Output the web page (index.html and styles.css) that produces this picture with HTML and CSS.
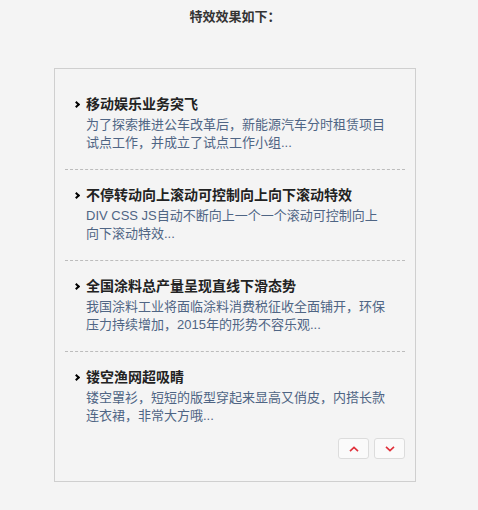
FILE: index.html
```html
<!DOCTYPE html>
<html>
<head>
<meta charset="utf-8" />
<title>向上向下滚动新闻</title>
<link rel="stylesheet" href="styles.css">
</head>
<body>
<div class="wrap">
	<h3 class="head">特效效果如下：</h3>
	<div class="news">
		<ul class="list">
			<li>
				<h4>移动娱乐业务突飞</h4>
				<p>为了探索推进公车改革后，新能源汽车分时租赁项目试点工作，并成立了试点工作小组...</p>
			</li>
			<li>
				<h4>不停转动向上滚动可控制向上向下滚动特效</h4>
				<p>DIV CSS JS自动不断向上一个一个滚动可控制向上向下滚动特效...</p>
			</li>
			<li>
				<h4>全国涂料总产量呈现直线下滑态势</h4>
				<p>我国涂料工业将面临涂料消费税征收全面铺开，环保压力持续增加，2015年的形势不容乐观...</p>
			</li>
			<li>
				<h4>镂空渔网超吸睛</h4>
				<p>镂空罩衫，短短的版型穿起来显高又俏皮，内搭长款连衣裙，非常大方哦...</p>
			</li>
		</ul>
		<div class="ctrl">
			<a class="btn" href="javascript:;"><svg width="10" height="6" viewBox="0 0 10 6"><polyline points="1,5.2 5,1.4 9,5.2" /></svg></a>
			<a class="btn" href="javascript:;"><svg width="10" height="6" viewBox="0 0 10 6"><polyline points="1,0.8 5,4.6 9,0.8" /></svg></a>
		</div>
	</div>
</div>
</body>
</html>
```

FILE: styles.css
```css
body{
	margin:0;
	background:#f4f4f4;
	font-family:"Liberation Sans","Noto Sans CJK SC",sans-serif;
	color:#333;
}
.wrap{
	width:362px;
	margin-left:54px;
}
.head{
	margin:0;
	padding-top:7px;
	font-size:13px;
	line-height:20px;
	text-align:center;
	color:#333;
}
.news{
	margin-top:41px;
	border:1px solid #cfcfcf;
	padding:10px 10px 22px;
}
.list{
	margin:0;
	padding:0;
	list-style:none;
}
.list li{
	padding:13px 0 17px 21px;
	border-bottom:1px dashed #bcbcbc;
}
.list li:last-child{
	border-bottom:none;
	padding-bottom:13px;
}
.list h4{
	position:relative;
	margin:0;
	font-size:14px;
	line-height:24px;
	color:#222;
}
/* small arrow in front of each title */
.list h4:before{
	content:"";
	position:absolute;
	left:-12px;
	top:10px;
	width:3px;
	height:3px;
	border-top:2px solid #000;
	border-right:2px solid #000;
	transform:rotate(45deg);
}
.list p{
	width:300px;
	margin:0;
	font-size:13px;
	line-height:18px;
	color:#4f6584;
}
.ctrl{
	display:flex;
	justify-content:flex-end;
	gap:5px;
}
.btn{
	display:flex;
	align-items:center;
	justify-content:center;
	width:29px;
	height:19px;
	border:1px solid #dcdcdc;
	border-radius:3px;
	background:#fafafa;
}
.btn svg{
	fill:none;
	stroke:#e0303a;
	stroke-width:1.6;
}
```
